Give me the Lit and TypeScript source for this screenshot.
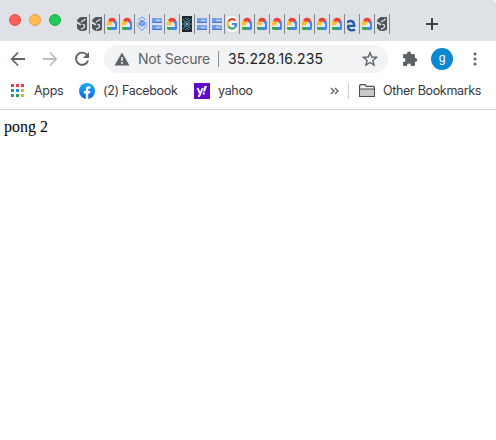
import { LitElement, html, svg, css } from "lit";
import { customElement } from "lit/decorators.js";

const favicons: Record<string, unknown> = {
  globe: svg`<path d="M0 5Q1.5 1.2 5 1H10V13.5Q8.5 15 5 15Q1.5 15 0 12Z" fill="#505458"/><path d="M0 6.8Q1.6 6.6 2.4 8L4 8.8" fill="none" stroke="#dee1e6" stroke-width="1.8"/><path d="M8.4 2.8Q7.4 4.6 5.6 4.8Q4.4 5 4.2 6.4M5.4 8.4Q8 8.6 7.6 10.4Q7 12.6 4 13" fill="none" stroke="#dee1e6" stroke-width="1.3"/>`,
  cloud: svg`<path d="M1 6Q1.5 1.8 5 1.8T9 5L7.2 6.4Q5 4.6 3.4 6.2Z" fill="#ea4335"/><path d="M7.2 5.2L9 4.6L10 6V11H8V8L6.6 6.4Z" fill="#4a87f0"/><path d="M0 6L1.5 4.8L5.6 6.6L4 10L2.2 8.8L0 10.6Z" fill="#fbbc30"/><path d="M3.4 10L5.2 7L8 8V11H0V10.6L2.2 8.8Z" fill="#e6e9f3"/><path d="M0 11H5V14H1L0 13Z" fill="#34a853"/><path d="M5 11H10V13L9 14H5Z" fill="#4285f4"/>`,
  hex: svg`<g fill="none" stroke="#8fb1ec" stroke-width="1.2"><path d="M1 4L5 1L9 4M.6 6V10L5 14.5L9.4 10V6"/></g><path d="M5 3.8L8 5.5V9L5 10.8L2 9V5.5Z" fill="#5c8de6"/><path d="M2.5 6L5 7.4L7.5 6M5 7.4V10" fill="none" stroke="#b8cef5" stroke-width=".8"/>`,
  stack: svg`<path d="M0 2H10V7H0ZM0 9H10V14H0Z" fill="#82a8ee"/><path d="M0 2H4V7H0ZM0 9H4V14H0Z" fill="#6e9bed"/><path d="M0 6H10V7H0ZM0 13H10V14H0Z" fill="#4676d4"/><path d="M4 4.5H8M4 11.5H8" stroke="#c5d7f8"/>`,
  atom: svg`<path d="M0 0H10V16H0Z" fill="#20272e"/><g stroke="#4a93a5" stroke-width="1" fill="none"><path d="M1 3L9 13M9 3L1 13M0 8H2M8 8H10M3 2L5 4L7 2M3 14L5 12L7 14"/><circle cx="5" cy="8" r="2.5"/></g><circle cx="5" cy="8" r="1" fill="#87d9e6"/>`,
  google: svg`<rect y="0" width="10" height="16" rx="4" fill="#fff"/><g fill="none" stroke-width="2.2"><path d="M1.4 5.4A4.4 4.4 0 0 1 8.6 4.6" stroke="#ea4335"/><path d="M1.4 5.2A5.5 5.5 0 0 0 1.4 10.8" stroke="#fbbc05"/><path d="M1.4 10.6A4.6 4.6 0 0 0 7.8 11.8" stroke="#34a853"/><path d="M5 8H9Q9 10.5 7.8 11.8" stroke="#4285f4"/></g>`,
  edge: svg`<path d="M.4 9.8H7.2Q7.2 5.2 3.8 5Q1.6 4.9 0 6.6M1 9.6Q1 14.4 4.8 14.4Q7 14.4 8 13.4" fill="none" stroke="#215ba6" stroke-width="2.3"/>`,
};

const tabs = [
  "globe", "globe", "cloud", "cloud", "hex", "stack", "cloud", "atom", "stack", "stack", "google",
  ...Array(7).fill("cloud"), "edge", "cloud", "globe",
];

@customElement("app-root")
export class AppRoot extends LitElement {
  static styles = css`
    :host { display: block; height: 440px; background: #fff; overflow: hidden; font-family: Inter, "Liberation Sans", sans-serif; }
    * { box-sizing: border-box; }
    svg { display: block; flex: none; }
    .strip { height: 41px; background: #dee1e6; display: flex; border-top-right-radius: 4px; }
    .lights { display: flex; gap: 8px; padding: 14px 0 0 9px; width: 75px; }
    .light { width: 12px; height: 12px; border-radius: 50%; border: 1px solid; }
    .red { background: #ff5f5b; border-color: #e54d4b; }
    .amber { background: #ffbd4f; border-color: #dfa145; }
    .green { background: #20cb59; border-color: #1aaa46; }
    .tabs { display: flex; padding-top: 14px; }
    .tab { width: 15px; height: 20px; border-right: 1px solid #83868b; padding: 2px 0 0 2px; }
    .plus { margin: 18px 0 0 36px; }
    .bar { height: 36px; display: flex; align-items: center; padding-left: 10px; }
    .reload { margin-left: 16px; }
    .next { margin-left: 16px; }
    .omni { width: 284px; height: 28px; margin-left: 14px; border-radius: 14px; background: #f1f3f4; display: flex; align-items: center; padding-left: 10px; font-size: 14px; white-space: nowrap; }
    .state { width: 80px; margin-left: 8px; padding-bottom: 2px; color: #5f6368; letter-spacing: -0.2px; }
    .rule { width: 1px; height: 16px; background: #8b8e92; }
    .url { margin-left: 9px; width: 134px; padding-bottom: 2px; color: #202124; letter-spacing: 0.19px; }
    .puzzle { margin-left: 14px; }
    .avatar { width: 22px; height: 22px; margin-left: 13px; border-radius: 50%; background: #0b88cf; color: #fff; font: 12px/20px Roboto, sans-serif; text-align: center; }
    .dots { margin-left: 20px; }
    .marks { height: 33px; border-bottom: 1px solid #d6d7d9; display: flex; align-items: center; padding: 0 0 5px 11px; font-size: 12.5px; color: #35383c; white-space: nowrap; }
    .marks > * { flex: none; }
    .label { letter-spacing: -0.32px; }
    .apps { width: 45px; margin-left: 10px; }
    .fb { width: 91px; margin-left: 8px; }
    .yahoo { width: 112px; margin-left: 8px; }
    .split { width: 1px; height: 16px; background: #c8cacc; margin: 0 10px 0 9px; }
    .other { margin-left: 8px; }
    .page { font: 16px/18px "Liberation Serif", serif; color: #000; padding: 8px 4px; }
  `;

  render() {
    return html`
      <div class="strip">
        <div class="lights"><i class="light red"></i><i class="light amber"></i><i class="light green"></i></div>
        <div class="tabs">${tabs.map((t) => html`<div class="tab"><svg width="10" height="16" viewBox="0 0 10 16">${favicons[t]}</svg></div>`)}</div>
        <svg class="plus" width="12" height="12" viewBox="0 0 12 12"><path d="M0 6H12M6 0V12" stroke="#3c4043" stroke-width="2"/></svg>
      </div>
      <div class="bar">
        <svg width="16" height="16" viewBox="0 0 16 16" fill="none" stroke="#5f6368" stroke-width="1.8"><path d="M15 8H2M8 1.5L1.8 8L8 14.5"/></svg>
        <svg class="next" width="16" height="16" viewBox="0 0 16 16" fill="none" stroke="#babcbe" stroke-width="1.8"><path d="M1 8H14M8 1.5L14.2 8L8 14.5"/></svg>
        <svg class="reload" width="16" height="16" viewBox="0 0 16 16"><path d="M13 4A6.1 6.1 0 1 0 14 9.4" fill="none" stroke="#5f6368" stroke-width="1.9"/><path d="M15 1V7H9Z" fill="#5f6368"/></svg>
        <div class="omni">
          <svg width="16" height="16" viewBox="0 0 16 16"><path d="M8 1.5L15.5 14.5H.5Z" fill="#5f6368"/><path d="M8 6V10M8 11V13" stroke="#f1f3f4" stroke-width="1.5"/></svg>
          <span class="state">Not Secure</span><span class="rule"></span><span class="url">35.228.16.235</span>
          <svg width="16" height="16" viewBox="0 0 16 16"><path d="M8 1.8L9.8 6L14.4 6.4L10.9 9.4L12 14L8 11.5L4 14L5.1 9.4L1.6 6.4L6.2 6Z" fill="none" stroke="#5f6368" stroke-width="1.4"/></svg>
        </div>
        <svg class="puzzle" width="16" height="16" viewBox="0 0 16 16"><path d="M1 4.2Q1 3 2.2 3H5V2.5A2 2 0 0 1 9 2.5V3H11.8Q13 3 13 4.2V7H13.4A1.9 1.9 0 0 1 13.4 10.8H13V14Q13 15 11.8 15H9V14.4A2 2 0 0 0 5 14.4V15H2.2Q1 15 1 14V11H1.5A2 2 0 0 0 1.5 7H1Z" fill="#5f6368"/></svg>
        <div class="avatar">g</div>
        <svg class="dots" width="4" height="14" viewBox="0 0 4 14" fill="#5f6368"><circle cx="2" cy="2" r="1.5"/><circle cx="2" cy="7" r="1.5"/><circle cx="2" cy="12" r="1.5"/></svg>
      </div>
      <div class="marks">
        <svg width="13" height="13" viewBox="0 0 13 13"><path d="M0 0H3V3H0ZM5 0H8V3H5ZM10 0H13V3H10Z" fill="#ee3945"/><path d="M0 5H3V8H0ZM0 10H3V13H0ZM5 10H8V13H5Z" fill="#289f5d"/><path d="M5 5H8V8H5Z" fill="#1e88e5"/><path d="M10 5H13V8H10ZM10 10H13V13H10Z" fill="#f2a93b"/></svg>
        <span class="label apps">Apps</span>
        <svg width="16" height="16" viewBox="0 0 16 16"><defs><linearGradient id="f" x2="0" y2="1"><stop stop-color="#18acfe"/><stop offset="1" stop-color="#0866e3"/></linearGradient></defs><circle cx="8" cy="8" r="8" fill="url(#f)"/><path d="M6.8 16V10.4H4.8V8H6.8V6.3Q6.8 3.2 9.8 3.2L11.5 3.4V5.4H10.4Q9.2 5.4 9.2 6.6V8H11.4L11 10.4H9.2V16Z" fill="#fff"/></svg>
        <span class="label fb">(2) Facebook</span>
        <svg width="16" height="16" viewBox="0 0 16 16"><path d="M0 0H16V16H0Z" fill="#5f0ac9"/><path d="M3.5 5L5.8 10M8.7 5L5.3 13H4" fill="none" stroke="#fff" stroke-width="1.9"/><path d="M10.5 3H13L11 8.6H9ZM8.7 9.4H10.7V11.4H8.7Z" fill="#fff"/></svg>
        <span class="label yahoo">yahoo</span>
        <svg width="9" height="8" viewBox="0 0 9 8" fill="none" stroke="#5f6368" stroke-width="1.4"><path d="M1 1L4 4L1 7M5 1L8 4L5 7"/></svg>
        <i class="split"></i>
        <svg width="16" height="14" viewBox="0 0 16 14"><path d="M.6 12.4V1.6L1.6.6H6L7.4 2.4H14.5L15.4 3.3V12.4Z" fill="#f5f5f5" stroke="#4b4b4b" stroke-width="1.2"/><path d="M1.2 5.2H14.8V11.8H1.2Z" fill="#c9c9c9"/><path d="M1 5H15" stroke="#4b4b4b"/></svg>
        <span class="label other">Other Bookmarks</span>
      </div>
      <div class="page">pong 2</div>`;
  }
}
